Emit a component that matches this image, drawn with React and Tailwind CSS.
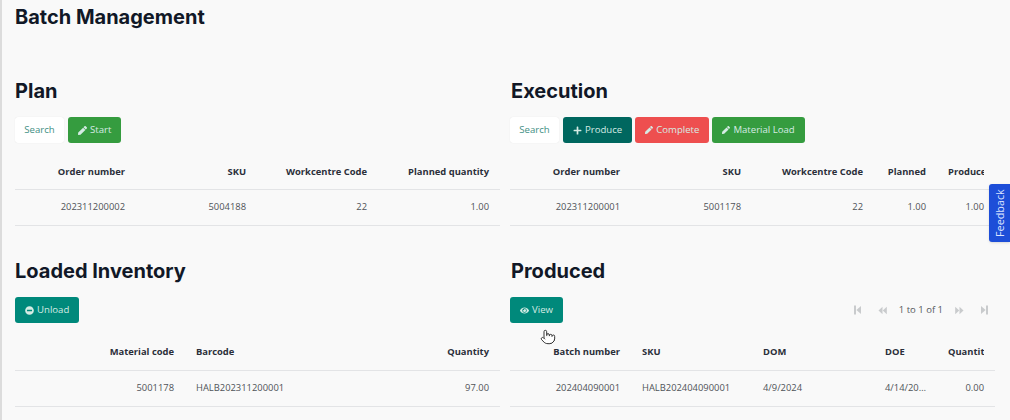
import { Pointer } from 'lucide-react'
import { FaEye, FaMinusCircle, FaPen, FaPlus } from 'react-icons/fa'

const heading = "font-['Inter',sans-serif] font-bold text-[#111827]"

function Btn({ color, icon, children }) {
  return (
    <button className={`flex items-center gap-[3px] h-[26px] px-[10px] rounded-[3px] text-[9.6px] text-[#d5ebe4] ${color}`}>
      {icon}
      {children}
    </button>
  )
}

function SearchBtn() {
  return (
    <button className="h-[26px] w-[49px] mr-[1px] rounded-[3px] bg-white text-[9.6px] text-[#3f8f85] shadow-[0_0_1px_rgba(0,0,0,0.12)]">
      Search
    </button>
  )
}

function DataTable({ cols, head, row, alignLeft = [], clip, tall }) {
  const align = (i) => (alignLeft.includes(i) ? 'text-left' : 'text-right')
  return (
    <table className="table-fixed w-[485px] border-collapse">
      <colgroup>
        {cols.map((w, i) => (
          <col key={i} className={w} />
        ))}
      </colgroup>
      <thead>
        <tr className={`border-b border-[#e3e4e6] ${tall ? 'h-[47px]' : 'h-[46px]'}`}>
          {head.map((h, i) => (
            <th key={h} className={`px-[11px] pt-[12px] text-[9.4px] font-bold text-[#2b2f3a] overflow-hidden whitespace-nowrap ${align(i)}`}>
              {clip && i === head.length - 1 ? <span className="block overflow-hidden text-left">{h}</span> : h}
            </th>
          ))}
        </tr>
      </thead>
      <tbody>
        <tr className="h-[36px] border-b border-[#e3e4e6]">
          {row.map((c, i) => (
            <td key={i} className={`px-[11px] text-[9.4px] text-[#4f5358] truncate ${align(i)}`}>
              {c}
            </td>
          ))}
        </tr>
      </tbody>
    </table>
  )
}

function FirstIcon({ flip }) {
  return (
    <svg width="7" height="10" viewBox="0 0 7 10" fill="#c9cbcd" className={flip ? 'rotate-180' : ''}>
      <rect x="0" y="0.5" width="2" height="9" />
      <path d="M7 1v8L2.4 5z" />
    </svg>
  )
}

function PrevIcon({ flip }) {
  return (
    <svg width="9" height="9" viewBox="0 0 9 9" fill="#c9cbcd" className={flip ? 'rotate-180' : ''}>
      <path d="M4.5 0.8v7.4L0.5 4.5z" />
      <path d="M8.8 0.8v7.4L4.8 4.5z" />
    </svg>
  )
}

function Pager() {
  return (
    <div className="ml-auto mr-[7px] flex items-center text-[9.5px] text-[#55585c]">
      <FirstIcon />
      <span className="ml-[17px]"><PrevIcon /></span>
      <span className="mx-[12px]">1 to 1 of 1</span>
      <PrevIcon flip />
      <span className="ml-[17px]"><FirstIcon flip /></span>
    </div>
  )
}

export default function App() {
  return (
    <div className="relative w-[1010px] h-[420px] overflow-hidden bg-[#f9f9f9] border-l-[2px] border-[#dcdcdc] pl-[13px] font-['Open_Sans',sans-serif]">
      <h1 className={`${heading} text-[20px] leading-[24px] pt-[5px] h-[77px]`}>Batch Management</h1>

      <div className="grid grid-cols-[485px_485px] gap-x-[10px]">
        <section className="h-[180px]">
          <h2 className={`${heading} text-[20px] leading-[24px] pt-[2px] h-[40px]`}>Plan</h2>
          <div className="flex gap-[3px]">
            <SearchBtn />
            <Btn color="bg-[#359c3f]" icon={<FaPen size={9} />}>Start</Btn>
          </div>
          <DataTable
            cols={['w-[121px]', 'w-[121px]', 'w-[121px]', 'w-[122px]']}
            head={['Order number', 'SKU', 'Workcentre Code', 'Planned quantity']}
            row={['202311200002', '5004188', '22', '1.00']}
          />
        </section>

        <section className="h-[180px]">
          <h2 className={`${heading} text-[20px] leading-[24px] pt-[2px] h-[40px] pl-[1px]`}>Execution</h2>
          <div className="flex gap-[3px]">
            <SearchBtn />
            <Btn color="bg-[#00675f]" icon={<FaPlus size={9} />}>Produce</Btn>
            <Btn color="bg-[#ee4f4f]" icon={<FaPen size={8} />}>Complete</Btn>
            <Btn color="bg-[#359c3f]" icon={<FaPen size={8} />}>Material Load</Btn>
          </div>
          <DataTable
            cols={['w-[121px]', 'w-[121px]', 'w-[122px]', 'w-[63px]', 'w-[58px]']}
            head={['Order number', 'SKU', 'Workcentre Code', 'Planned', 'Produced']}
            row={['202311200001', '5001178', '22', '1.00', '1.00']}
            clip
          />
        </section>

        <section>
          <h2 className={`${heading} text-[20px] leading-[24px] pt-[2px] h-[40px]`}>Loaded Inventory</h2>
          <div className="flex gap-[3px]">
            <Btn color="bg-[#00897b]" icon={<FaMinusCircle size={9} />}>Unload</Btn>
          </div>
          <DataTable
            cols={['w-[170px]', 'w-[180px]', 'w-[135px]']}
            head={['Material code', 'Barcode', 'Quantity']}
            row={['5001178', 'HALB202311200001', '97.00']}
            alignLeft={[1]}
            tall
          />
        </section>

        <section>
          <h2 className={`${heading} text-[20px] leading-[24px] pt-[2px] h-[40px] pl-[1px]`}>Produced</h2>
          <div className="flex items-center">
            <Btn color="bg-[#00897b]" icon={<FaEye size={9} />}>View</Btn>
            <Pager />
          </div>
          <DataTable
            cols={['w-[121px]', 'w-[121px]', 'w-[122px]', 'w-[63px]', 'w-[58px]']}
            head={['Batch number', 'SKU', 'DOM', 'DOE', 'Quantity']}
            row={['202404090001', 'HALB202404090001', '4/9/2024', '4/14/2024', '0.00']}
            alignLeft={[1, 2, 3]}
            clip
            tall
          />
        </section>
      </div>

      <div className="absolute right-[0px] top-[184px] w-[21px] h-[58px] rounded-l-[3px] bg-[#1d4ed8] shadow flex items-center justify-center">
        <span className="-rotate-90 whitespace-nowrap text-[10.8px] text-[#dbe4ff]">Feedback</span>
      </div>
      <Pointer size={16} strokeWidth={1.5} className="absolute left-[538px] top-[329px] text-[#333] fill-white" />
    </div>
  )
}
